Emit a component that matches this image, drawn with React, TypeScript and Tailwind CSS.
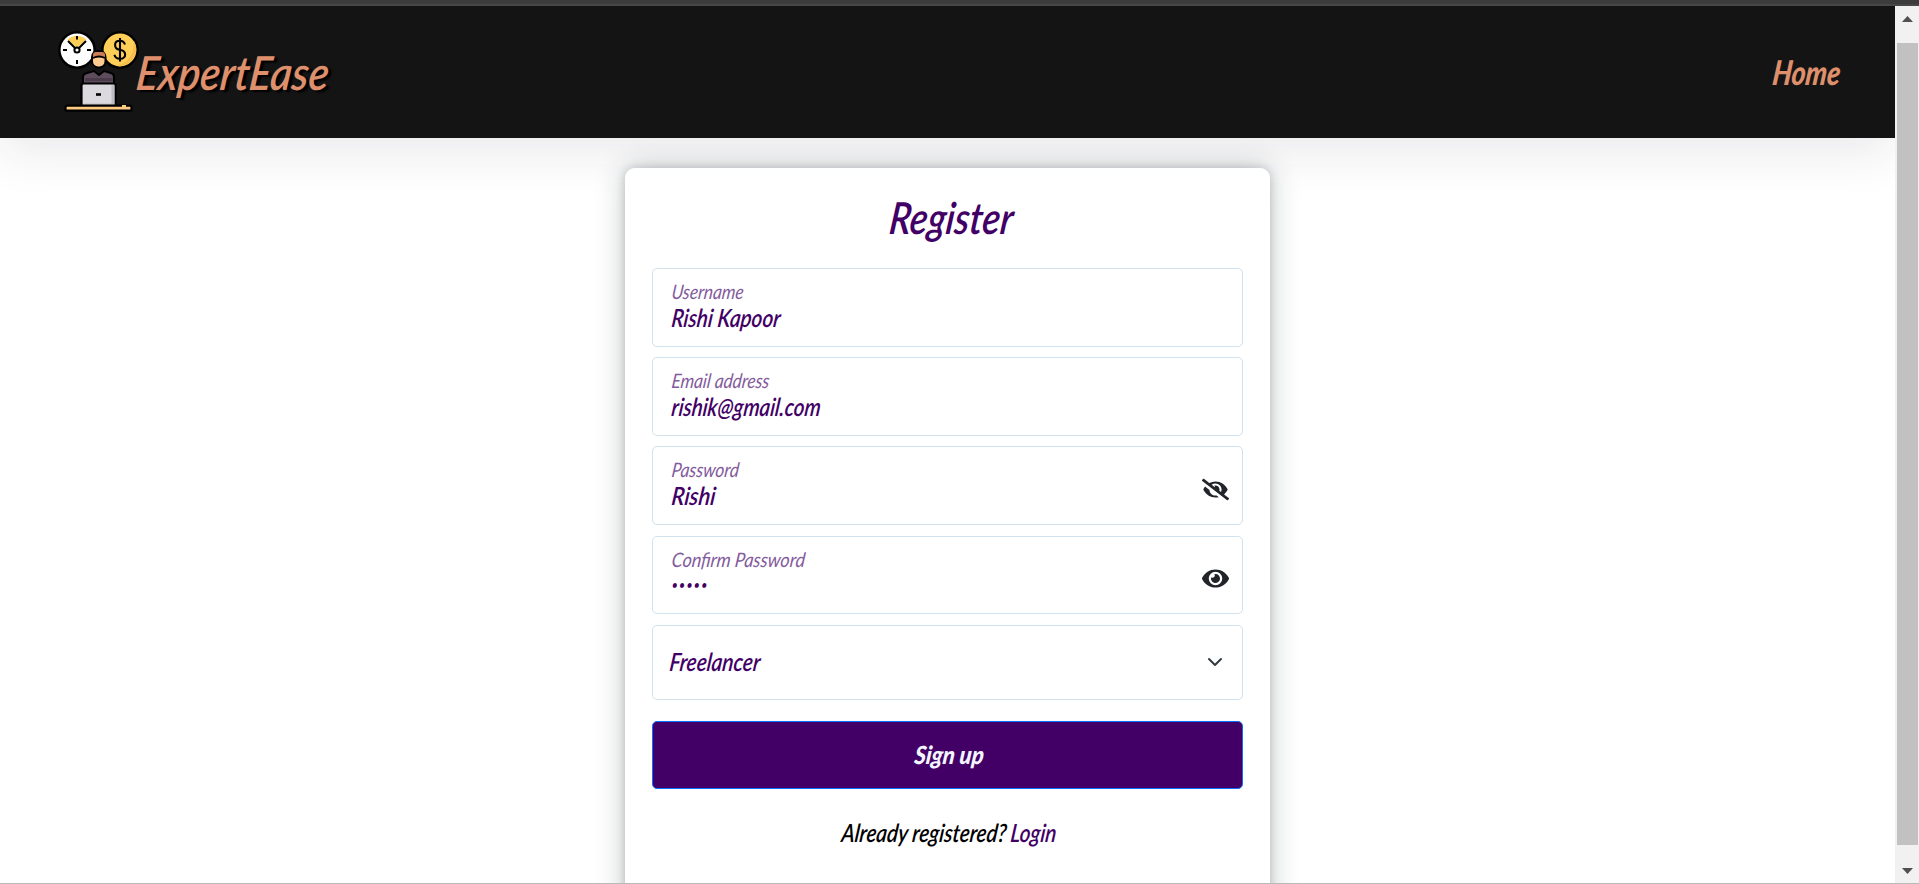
import { useLayoutEffect, useRef, useState, type ReactNode } from "react";
import { FaEye, FaEyeSlash } from "react-icons/fa";

/** Slanted text squeezed horizontally so that it fills the given width. */
function Fit({ width, className = "", children }: { width: number; className?: string; children: ReactNode }) {
  const ref = useRef<HTMLSpanElement>(null);
  const [scale, setScale] = useState(1);
  useLayoutEffect(() => {
    if (ref.current) setScale(width / ref.current.offsetWidth);
  }, [width]);
  return (
    <span className={`block whitespace-nowrap ${className}`} style={{ width }}>
      <span ref={ref} className="inline-block origin-left" style={{ transform: `skewX(-7deg) scaleX(${scale})` }}>
        {children}
      </span>
    </span>
  );
}

function Logo() {
  return (
    <svg viewBox="0 0 82 84" className="h-[84px] w-[82px] shrink-0" fill="none">
      <circle cx="19" cy="20" r="17.6" fill="#fff" stroke="#000" strokeWidth="2.4" />
      <path d="M29 7.500a16 16 0 0 1-1 25 16 16 0 0 0 1-25Z" fill="#dcdce2" />
      <path d="m19 18-9.500-8.500Q19 2 28.500 9.500Z" fill="#ffcf58" />
      <path d="m10 11 7 7m11-7-7 7M19 6v3.500M19 30v4M5 20h4m20 0h4" stroke="#000" strokeWidth="2" />
      <circle cx="19" cy="20" r="2.600" fill="#fff" stroke="#000" strokeWidth="2" />
      <circle cx="62" cy="20" r="17.600" fill="#ffcf58" stroke="#000" strokeWidth="2.400" />
      <path d="M76 11a17 17 0 0 1-17 25q17-5 17-25Z" fill="#f9bd4c" />
      <path d="M67 14.500c-1-3-3-3.700-5.200-3.700-6.300 0-6.300 8 0 9 7.200 1 7 9 .2 9-3 0-5-1.500-5.600-4M62 8v23.500" stroke="#000" strokeWidth="2.100" />
      <rect x="34" y="21" width="13.500" height="16.500" rx="6" fill="#ffcb91" stroke="#000" strokeWidth="2" />
      <path d="M35 29v-4q0-3 3-3h6q3 0 3 3v4q-6-4-12 0Z" fill="#cd7d55" />
      <path d="M35 28q6-3 12 0" stroke="#000" strokeWidth="1.800" />
      <path d="M25 54v-7q0-3 4-4l7-2 5 4 5-4 7 2q3 1 3 4v7Z" fill="#5d4c5b" stroke="#000" strokeWidth="2" />
      <path d="M27 51h28v-3H27Z" fill="#4b3b4b" />
      <rect x="23.500" y="53.500" width="34" height="23" rx="2" fill="#dbd9de" stroke="#000" strokeWidth="2.200" />
      <path d="M53.500 55h3v20h-31v-1.500h28Z" fill="#bebdc5" />
      <path d="M38 64.500h5" stroke="#000" strokeWidth="2.600" />
      <rect x="7.500" y="75.700" width="66" height="5" rx="1.500" fill="#ffcb80" stroke="#000" strokeWidth="2.200" />
      <path d="M64 76h4" stroke="#ffcb80" strokeWidth="2" />
    </svg>
  );
}

type FieldProps = {
  label: string;
  labelWidth: number;
  box: string;
  children: ReactNode;
  icon?: ReactNode;
};

function Field({ label, labelWidth, box, children, icon }: FieldProps) {
  return (
    <div className={`flex items-start justify-between rounded-[5px] border border-[#cfe2ee] pl-[19px] pr-[13px] ${box}`}>
      <div className="pt-[10px]">
        <Fit width={labelWidth} className="text-[20px] leading-[24px] text-[#835b9d]">{label}</Fit>
        <div className="text-[25px] font-semibold leading-[28px]">{children}</div>
      </div>
      <div className="pt-[29px] text-[27px] text-[#212529]">{icon}</div>
    </div>
  );
}

export default function App() {
  return (
    <div className="flex h-[884px] flex-col overflow-hidden bg-white font-['Lato','Open_Sans',sans-serif] italic text-[#420066]">
      <div className="h-[6px] shrink-0 border-b-2 border-[#474747] bg-[#3c3c3c]" />
      <div className="flex h-[877px] shrink-0">
        <div className="flex min-w-0 flex-1 flex-col overflow-hidden">
          <header className="flex h-[132px] shrink-0 items-center justify-between bg-[#141414] pl-[58px] pr-[54px] text-[#de8f6c] shadow-[0_16px_48px_rgba(33,37,60,0.09)]">
            <div className="flex items-center">
              <Logo />
              <Fit width={192} className="ml-[-3px] text-[47px] font-semibold leading-[60px] [text-shadow:4px_2px_2px_#000]">ExpertEase</Fit>
            </div>
            <Fit width={68} className="pb-px text-[34px] font-black leading-[40px]">Home</Fit>
          </header>
          <main className="mx-auto mt-[30px] flex h-[760px] w-[645px] shrink-0 flex-col rounded-[10px] bg-white/90 px-[27px] shadow-[0_0_10px_rgba(33,37,41,0.2),0_0_30px_rgba(15,35,35,0.24)]">
            <h1 className="flex h-[100px] shrink-0 justify-center pl-[8px] pt-[21px]">
              <Fit width={124} className="text-[44px] font-semibold leading-[56px]">Register</Fit>
            </h1>
            <Field label="Username" labelWidth={72} box="h-[79px]">
              <Fit width={109}>Rishi Kapoor</Fit>
            </Field>
            <Field label="Email address" labelWidth={98} box="mt-[10px] h-[79px]">
              <Fit width={149}>rishik@gmail.com</Fit>
            </Field>
            <Field label="Password" labelWidth={67} box="mt-[10px] h-[79px]" icon={<FaEyeSlash />}>
              <Fit width={44}>Rishi</Fit>
            </Field>
            <Field label="Confirm Password" labelWidth={133} box="mt-[11px] h-[78px]" icon={<FaEye className="-mt-px" />}>
              <Fit width={37} className="text-[12px] leading-[27px] tracking-[2px]">•••••</Fit>
            </Field>
            <div className="mt-[11px] flex h-[75px] items-center justify-between rounded-[5px] border border-[#cfe2ee] pl-[17px] pr-[19px]">
              <Fit width={91} className="pb-[4px] text-[25px] font-semibold leading-[30px]">Freelancer</Fit>
              <svg viewBox="0 0 16 16" className="mb-px size-[16px]" fill="none" stroke="#343a40" strokeWidth="2" strokeLinecap="round" strokeLinejoin="round">
                <path d="m2 5 6 6 6-6" />
              </svg>
            </div>
            <button className="mt-[21px] flex h-[68px] items-center justify-center rounded-[5px] border border-[#0d6efd] bg-[#420066] pb-[2px] pl-[4px] italic text-[#f4f6ff]">
              <Fit width={69} className="text-left text-[25px] font-black leading-[30px]">Sign up</Fit>
            </button>
            <p className="mt-[27px] flex justify-center gap-[4px] pl-[4px] text-[25px] font-semibold leading-[32px]">
              <Fit width={165} className="text-black">Already registered?</Fit>
              <Fit width={46}>Login</Fit>
            </p>
          </main>
        </div>
        <div className="flex w-[24px] shrink-0 flex-col items-center bg-[#f1f1f1] pt-[10px]">
          <svg viewBox="0 0 11 6" className="h-[6px] w-[11px]"><path d="M0 6 5.500 0 11 6Z" fill="#505050" /></svg>
          <div className="mt-[21px] h-[802px] w-[21px] bg-[#c1c1c1]" />
          <svg viewBox="0 0 11 6" className="mt-[23px] h-[6px] w-[11px]"><path d="m0 0 5.500 6L11 0Z" fill="#505050" /></svg>
        </div>
      </div>
      <div className="h-px shrink-0 bg-[#bababa]" />
    </div>
  );
}
